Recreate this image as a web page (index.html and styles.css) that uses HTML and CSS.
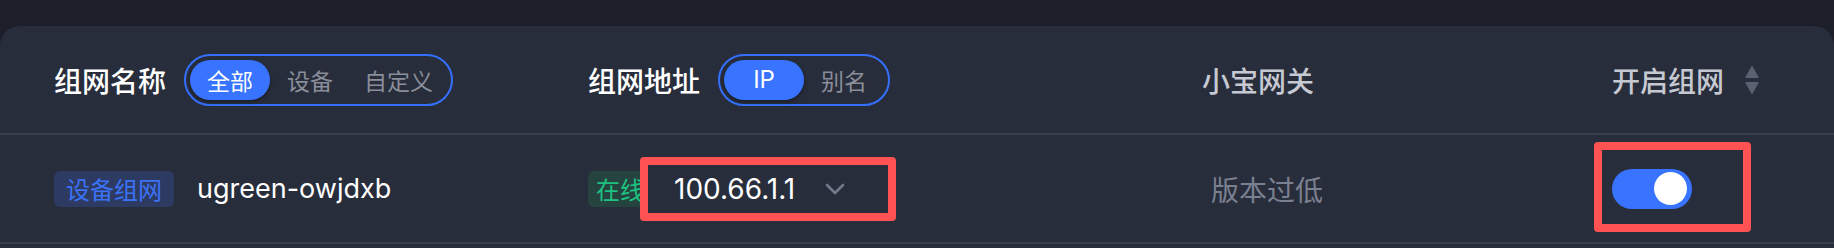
FILE: index.html
```html
<!DOCTYPE html>
<html lang="zh-CN">
<head>
<meta charset="utf-8">
<title>组网列表</title>
<link rel="stylesheet" href="styles.css">
</head>
<body>
<div class="page">
  <div class="card">
    <div class="thead">
      <div class="cell">
        <span class="th-title">组网名称</span>
        <div class="seg">
          <span class="seg-item active">全部</span>
          <span class="seg-item">设备</span>
          <span class="seg-item">自定义</span>
        </div>
      </div>
      <div class="cell">
        <span class="th-title">组网地址</span>
        <div class="seg">
          <span class="seg-item active latin">IP</span>
          <span class="seg-item">别名</span>
        </div>
      </div>
      <div class="cell">
        <span class="th-title muted">小宝网关</span>
      </div>
      <div class="cell">
        <span class="th-title muted">开启组网</span>
        <svg class="sort" width="14" height="30" viewBox="0 0 14 30">
          <path d="M7 0.5 L13.5 12 Q14 13 13 13 L1 13 Q0 13 0.5 12 Z" fill="#5b6171"/>
          <path d="M1 17 L13 17 Q14 17 13.5 18 L7 29.5 L0.5 18 Q0 17 1 17 Z" fill="#5b6171"/>
        </svg>
      </div>
    </div>
    <div class="trow">
      <div class="cell">
        <span class="tag tag-blue">设备组网</span>
        <span class="name latin">ugreen-owjdxb</span>
      </div>
      <div class="cell">
        <span class="tag tag-green">在线</span>
        <div class="ip-select annotated">
          <span class="ip latin">100.66.1.1</span>
          <svg class="chev" width="20" height="12" viewBox="0 0 20 12">
            <path d="M2 2 L10 10 L18 2" fill="none" stroke="#737988" stroke-width="2.6" stroke-linecap="round" stroke-linejoin="round"/>
          </svg>
        </div>
      </div>
      <div class="cell cell-gw">
        <span class="low">版本过低</span>
      </div>
      <div class="cell">
        <div class="toggle-wrap annotated">
          <span class="toggle on"><span class="knob"></span></span>
        </div>
      </div>
    </div>
  </div>
</div>
</body>
</html>
```
FILE: styles.css
```css
*, *::before, *::after { box-sizing: border-box; }
html, body { margin: 0; padding: 0; }
body {
  background: #1c1f2a;
  font-family: "Noto Sans CJK SC", "Noto Sans", sans-serif;
  color: #ffffff;
  width: 1834px;
  height: 248px;
  overflow: hidden;
}
.page { padding-top: 26px; }
.card {
  background: #282d3b;
  border-radius: 20px 20px 0 0;
  height: 222px;
}
.thead, .trow {
  display: grid;
  grid-template-columns: 534px 614px 410px 1fr;
  padding-left: 54px;
  height: 109px;
  align-items: center;
  border-bottom: 2px solid #3a3f4d;
}
.cell {
  display: flex;
  align-items: center;
}
.latin { font-family: "Inter", "Noto Sans CJK SC", sans-serif; }
.th-title {
  font-size: 28px;
  font-weight: 500;
  color: #ffffff;
  line-height: 1;
}
.th-title.muted { color: #c6c9d2; }
.seg {
  margin-left: 18px;
  display: flex;
  align-items: center;
  height: 52px;
  padding: 4px;
  border: 2px solid #3470ff;
  border-radius: 26px;
}
.seg-item {
  min-width: 80px;
  height: 40px;
  padding: 0 14px;
  display: flex;
  align-items: center;
  justify-content: center;
  font-size: 23px;
  color: #8a8e9a;
  border-radius: 20px;
}
.seg-item.active {
  background: #3874ff;
  color: #ffffff;
  box-shadow: 0 2px 4px rgba(0, 0, 0, 0.35);
}
.seg-item.latin { font-size: 24px; }
.sort { margin-left: 21px; display: block; }

.tag {
  height: 36px;
  display: inline-flex;
  align-items: center;
  font-size: 24px;
  border-radius: 6px;
}
.tag-blue {
  padding: 0 12px;
  background: #2d3b62;
  color: #3b72f6;
}
.tag-green {
  padding: 0 8px;
  background: #25433f;
  color: #1ec180;
}
.name {
  margin-left: 23px;
  font-size: 27px;
  color: #ffffff;
}
.ip-select {
  position: relative;
  z-index: 1;
  margin-left: -4px;
  width: 240px;
  height: 48px;
  display: flex;
  align-items: center;
  padding-left: 26px;
  background: #282d3b;
}
.ip {
  font-size: 28px;
  color: #ffffff;
}
.chev { margin-left: 30px; display: block; }
.annotated::after {
  content: "";
  position: absolute;
  border: 8px solid #ff5252;
  border-radius: 4px;
  pointer-events: none;
}
.ip-select.annotated::after {
  left: -8px;
  top: -8px;
  width: 256px;
  height: 64px;
}
.cell-gw { padding-left: 9px; }
.low {
  font-size: 28px;
  color: #7b8090;
}
.toggle-wrap {
  position: relative;
  display: flex;
}
.toggle-wrap.annotated::after {
  left: -18px;
  top: -27px;
  width: 157px;
  height: 90px;
}
.toggle {
  width: 80px;
  height: 40px;
  border-radius: 20px;
  background: #3874ff;
  position: relative;
  display: block;
}
.knob {
  position: absolute;
  right: 5px;
  top: 3.5px;
  width: 33px;
  height: 33px;
  border-radius: 50%;
  background: #ffffff;
}
```
